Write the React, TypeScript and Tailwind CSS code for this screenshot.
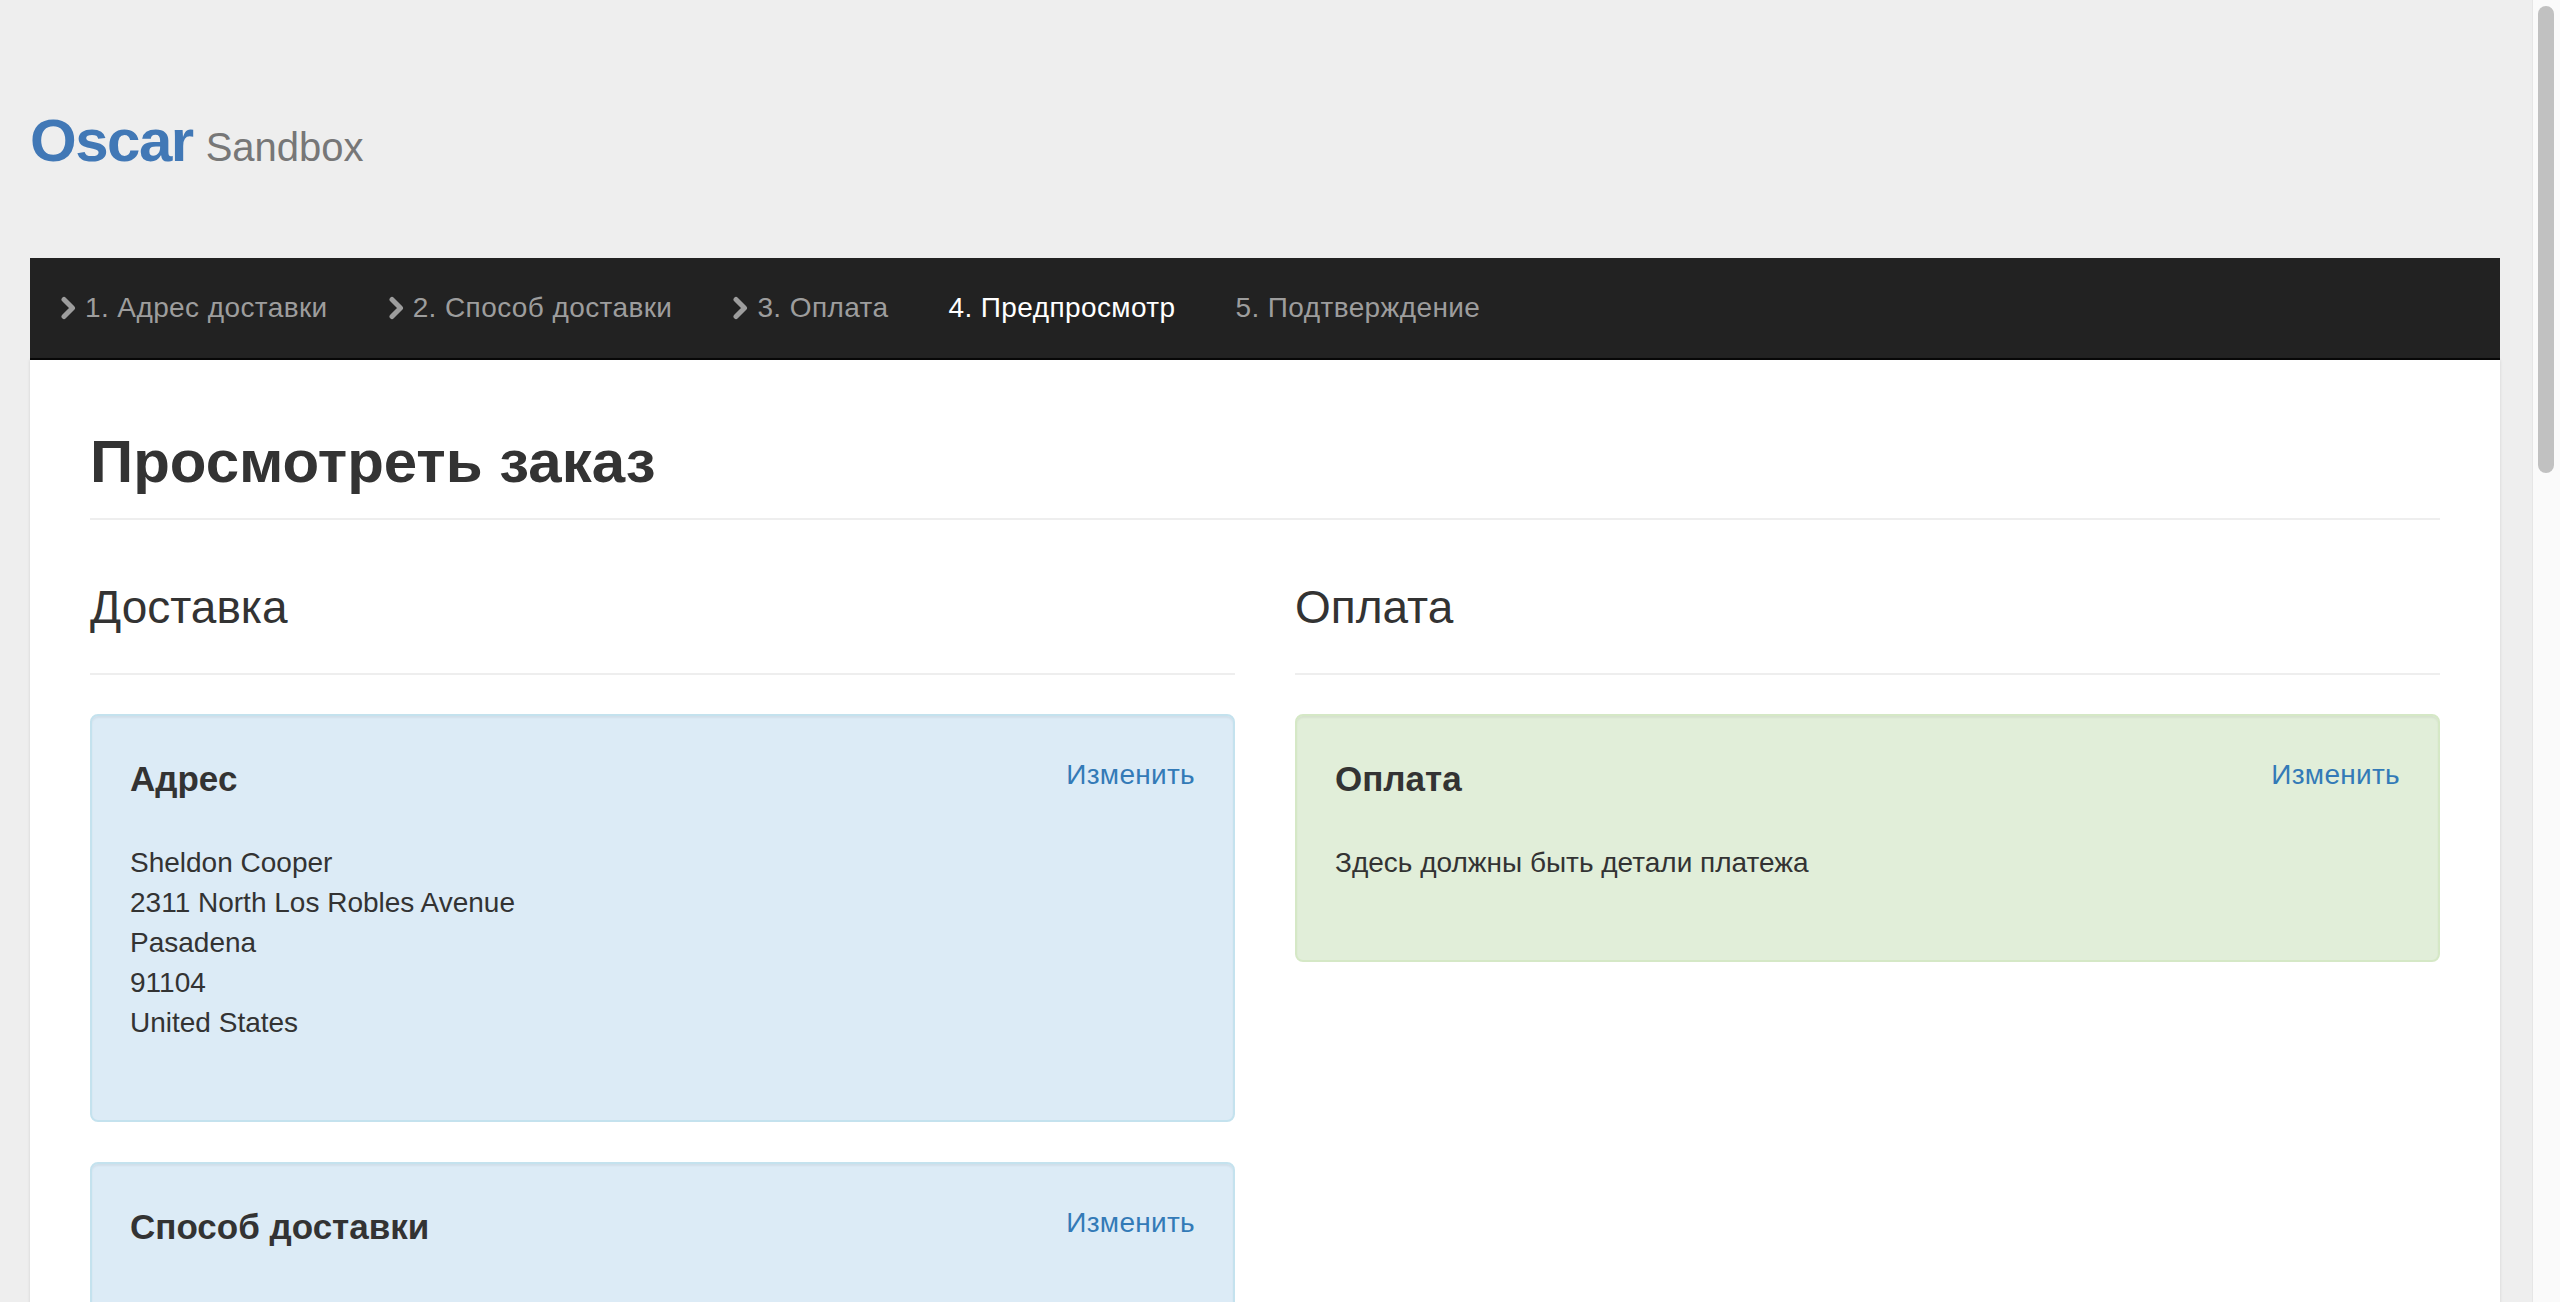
import React from "react";

const steps = [
	{ label: "1. Адрес доставки", done: true },
	{ label: "2. Способ доставки", done: true },
	{ label: "3. Оплата", done: true },
	{ label: "4. Предпросмотр", active: true },
	{ label: "5. Подтверждение" },
];

function Chevron() {
	return (
		<svg width="17" height="24" viewBox="0 0 17 24" className="mr-[8px] shrink-0">
			<path d="M4 3.5 L12.5 12 L4 20.5" fill="none" stroke="#9d9d9d" strokeWidth="5" strokeLinecap="round" strokeLinejoin="round" />
		</svg>
	);
}

function Panel({
	title,
	tone,
	children,
}: {
	title: string;
	tone: "info" | "success";
	children?: React.ReactNode;
}) {
	const toneClass =
		tone === "info"
			? "bg-[#dcebf6] border-[#c4e2ee]"
			: "bg-[#e1eed9] border-[#d5e8c6]";
	return (
		<div className={`border-2 rounded-[8px] px-[38px] pt-[39px] pb-[37px] mb-[40px] shadow-[inset_0_2px_2px_rgba(0,0,0,0.05)] ${toneClass}`}>
			<div className="flex justify-between items-start">
				<h4 className="text-[35px] leading-[48px] font-bold text-[#333]">{title}</h4>
				<a href="#" className="text-[28px] leading-[40px] tracking-[0.3px] text-[#337ab7]">
					Изменить
				</a>
			</div>
			<div className="mt-[40px] mb-[40px] text-[28px] leading-[40px]">{children}</div>
		</div>
	);
}

export default function App() {
	return (
		<div className="flex h-screen overflow-hidden bg-[#eeeeee] text-[#333] font-['Liberation_Sans',Arial,sans-serif]">
			<div className="flex-1 min-w-0 overflow-hidden">
				<div className="ml-[30px] mr-[32px]">
					{/* Brand header */}
					<header className="h-[258px] pt-[108px] flex items-baseline">
						<a href="#" className="text-[60px] leading-[66px] font-bold tracking-[-1.5px] text-[#4178b6]">
							Oscar
						</a>
						<small className="ml-[13px] text-[40px] leading-[40px] text-[#777]">Sandbox</small>
					</header>

					{/* Checkout steps */}
					<nav className="h-[102px] bg-[#222] border-b-2 border-[#080808] flex">
						{steps.map((step) => (
							<div
								key={step.label}
								className={`flex items-center px-[30px] py-[30px] text-[28px] leading-[40px] tracking-[0.4px] ${
									step.active ? "text-white" : "text-[#9d9d9d]"
								}`}
							>
								{step.done && <Chevron />}
								<span>{step.label}</span>
							</div>
						))}
					</nav>

					{/* Page body */}
					<main className="bg-white px-[60px] pt-[69px] pb-[80px] min-h-[1200px] shadow-[0_0_3px_rgba(0,0,0,0.12)]">
						<h1 className="text-[60px] leading-[66px] font-bold pb-[23px] border-b-2 border-[#eee]">Просмотреть заказ</h1>

						<div className="grid grid-cols-2 gap-x-[60px] mt-[63px]">
							<div>
								<h2 className="text-[46px] leading-[48px] pb-[42px] border-b-2 border-[#eee] mb-[39px]">Доставка</h2>
								<Panel title="Адрес" tone="info">
									<address className="not-italic">
										Sheldon Cooper
										<br />
										2311 North Los Robles Avenue
										<br />
										Pasadena
										<br />
										91104
										<br />
										United States
									</address>
								</Panel>
								<Panel title="Способ доставки" tone="info" />
							</div>

							<div>
								<h2 className="text-[46px] leading-[48px] pb-[42px] border-b-2 border-[#eee] mb-[39px]">Оплата</h2>
								<Panel title="Оплата" tone="success">
									<p>Здесь должны быть детали платежа</p>
								</Panel>
							</div>
						</div>
					</main>
				</div>
			</div>

			{/* Window scrollbar */}
			<div className="w-[28px] shrink-0 bg-[#fafafa] border-l border-[#e6e6e6] pt-[6px] pl-[5px]">
				<div className="w-[16px] h-[467px] rounded-full bg-[#c1c1c1]" />
			</div>
		</div>
	);
}
